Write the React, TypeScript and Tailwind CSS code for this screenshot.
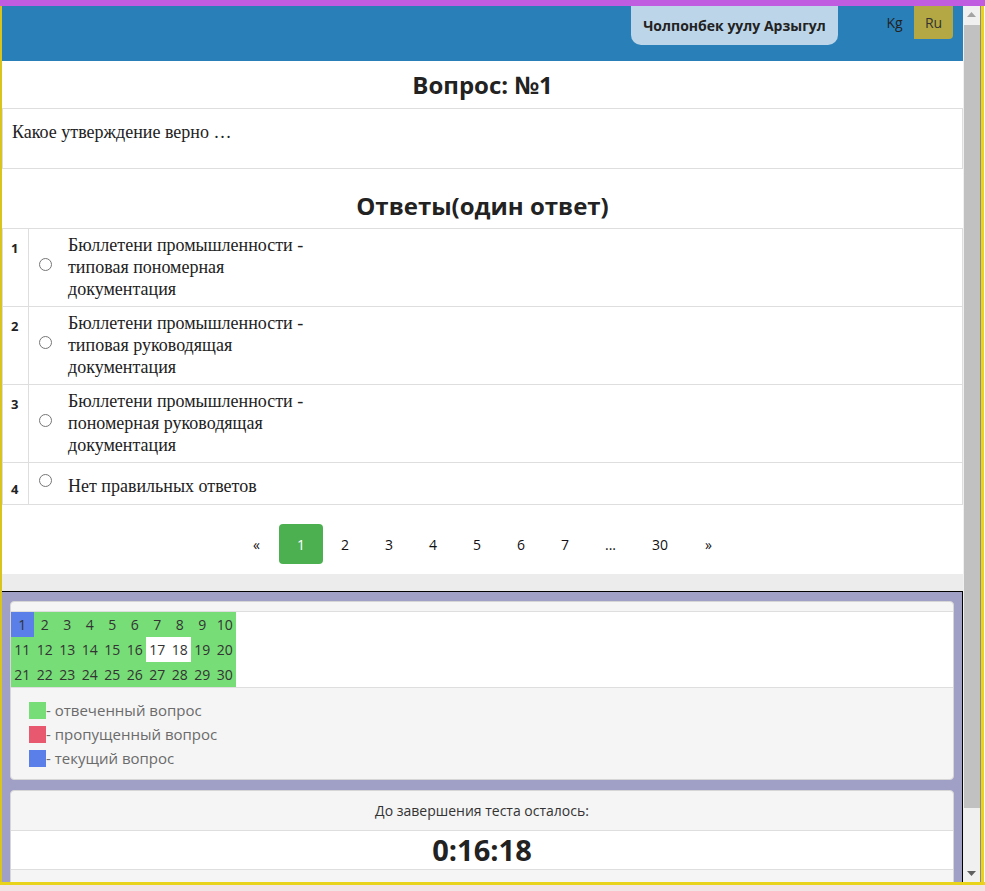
const sans = "font-['Open_Sans',_'Liberation_Sans',_sans-serif]"
const serif = "font-['Liberation_Serif',_'Times_New_Roman',_serif]"

const answers = [
  { n: 1, text: "Бюллетени промышленности - типовая пономерная документация" },
  { n: 2, text: "Бюллетени промышленности - типовая руководящая документация" },
  { n: 3, text: "Бюллетени промышленности - пономерная руководящая документация" },
]

const pages = ["«", "1", "2", "3", "4", "5", "6", "7", "...", "30", "»"]

function Radio() {
  return <span className="block w-[13px] h-[13px] rounded-full border border-[#767676] bg-white" />
}

function AnswerRow({ n, text, last }: { n: number; text: string; last?: boolean }) {
  return (
    <div className={"flex " + (last ? "h-[41px]" : "h-[78px] border-b border-[#dedede]")}>
      <div className={"w-[26px] border-r border-[#dedede] pl-[8px] text-[13px] font-bold text-[#222] " + sans + (last ? " pt-[17px]" : " pt-[10px]")}>
        {n}
      </div>
      <div className={"flex pl-[10px] " + (last ? "items-start pt-[11px]" : "items-center")}>
        <div className={last ? "" : "mb-[7px]"}>
          <Radio />
        </div>
      </div>
      <div className={"pl-[16px] w-[268px] text-[18px] leading-[22px] text-[#222] " + serif + (last ? " pt-[12px]" : " pt-[5px]")}>
        {text}
      </div>
    </div>
  )
}

function Grid() {
  const cells = Array.from({ length: 30 }, (_, i) => i + 1)
  return (
    <div className="grid grid-cols-[repeat(10,22.5px)] w-[225px]">
      {cells.map((c) => (
        <div
          key={c}
          className={
            "h-[25px] flex items-center justify-center text-[14px] text-[#333] " +
            (c === 1 ? "bg-[#5a7fe8]" : c === 17 || c === 18 ? "bg-white" : "bg-[#77dd77]")
          }
        >
          {c}
        </div>
      ))}
    </div>
  )
}

function Legend({ color, label }: { color: string; label: string }) {
  return (
    <div className="flex items-center h-[24px]">
      <span className={"w-[17px] h-[17px] " + color} />
      <span className="text-[15px] text-[#6b6b6b]">- {label}</span>
    </div>
  )
}

export default function App() {
  return (
    <div className={"w-[985px] h-[891px] bg-[#f1e5e6] overflow-hidden " + sans}>
      <div className="h-[6px] bg-[#bf5ce0]" />
      <div className="flex h-[879px] border-b-[3px] border-[#e9d31b]">
        <div className="w-[2px] bg-[#d9c41d]" />
        <div className="w-[961px] h-full overflow-hidden flex flex-col bg-white">
          <header className="h-[55px] shrink-0 bg-[#2980b9] flex justify-end items-start pr-[10px]">
            <div className="w-[207px] h-[39px] rounded-b-[10px] bg-[#bcd5e8] flex items-center justify-center text-[14px] font-bold text-[#222]">
              Чолпонбек уулу Арзыгул
            </div>
            <div className="ml-[37px] w-[39px] h-[33px] flex items-center justify-center text-[14px] text-[#222]">Kg</div>
            <div className="w-[39px] h-[33px] flex items-center justify-center text-[14px] text-[#333] bg-[#b3a844] rounded-br-[4px]">
              Ru
            </div>
          </header>

          <section className="shrink-0 bg-white flex flex-col">
            <div className="h-[47px] flex items-center justify-center pt-[1px]">
              <h2 className="text-[24px] leading-[30px] font-bold text-[#222]">Вопрос: №1</h2>
            </div>
            <div className={"h-[61px] border border-[#dedede] px-[9px] pt-[12px] text-[18px] leading-[22px] text-[#222] " + serif}>
              Какое утверждение верно …
            </div>
            <div className="h-[59px] flex items-end justify-center pb-[7px]">
              <h2 className="text-[24px] leading-[30px] font-bold text-[#222]">Ответы(один ответ)</h2>
            </div>
            <div className="border border-[#dedede]">
              {answers.map((a) => (
                <AnswerRow key={a.n} n={a.n} text={a.text} />
              ))}
              <AnswerRow n={4} text="Нет правильных ответов" last />
            </div>
            <nav className="mt-[19px] mb-[10px] flex justify-center">
              {pages.map((p) => (
                <span
                  key={p}
                  className={
                    "h-[40px] px-[18px] flex items-center text-[14px] " +
                    (p === "1" ? "bg-[#4caf50] text-white rounded-[4px]" : "text-[#111]") +
                    (p === "«" || p === "»" ? " text-[12px] px-[19px]" : "")
                  }
                >
                  {p}
                </span>
              ))}
            </nav>
          </section>

          <div className="h-[17px] shrink-0 bg-[#ececec]" />

          <section className="flex-1 border-t border-r border-black bg-[#a09fc5] pl-[8px] pr-[8px] pt-[9px]">
            <div className="border border-[#d6d6d6] rounded-[4px] bg-[#f5f5f5]">
              <div className="mt-[9px] bg-white border-y border-[#dedede]">
                <Grid />
              </div>
              <div className="pl-[18px] pt-[10px] pb-[9px]">
                <Legend color="bg-[#77dd77]" label="отвеченный вопрос" />
                <Legend color="bg-[#e8596f]" label="пропущенный вопрос" />
                <Legend color="bg-[#5a7fe8]" label="текущий вопрос" />
              </div>
            </div>
            <div className="mt-[10px] border border-[#d6d6d6] rounded-t-[4px] bg-[#f5f5f5]">
              <div className="h-[40px] flex items-center justify-center text-[14px] text-[#333] border-b border-[#dedede]">
                До завершения теста осталось:
              </div>
              <div className="h-[39px] bg-white flex items-center justify-center text-[29px] font-bold text-[#222] border-b border-[#dedede]">
                0:16:18
              </div>
              <div className="h-[30px]" />
            </div>
          </section>
        </div>

        <div className="w-[17px] bg-[#f0f0f0] flex flex-col">
          <div className="h-[17px] flex items-center justify-center">
            <svg width="9" height="5" viewBox="0 0 9 5"><path d="M0 5 L4.5 0 L9 5 Z" fill="#a3a3a3" /></svg>
          </div>
          <div className="ml-[1px] mt-[2px] h-[783px] bg-[#c1c1c1]" />
          <div className="flex-1" />
          <div className="h-[17px] flex items-center justify-center">
            <svg width="9" height="5" viewBox="0 0 9 5"><path d="M0 0 L9 0 L4.5 5 Z" fill="#606060" /></svg>
          </div>
        </div>
        <div className="w-[1px] bg-[#8a8a8a]" />
        <div className="w-[3px] bg-[#e9d31b]" />
        <div className="w-[1px] bg-white" />
      </div>
    </div>
  )
}
